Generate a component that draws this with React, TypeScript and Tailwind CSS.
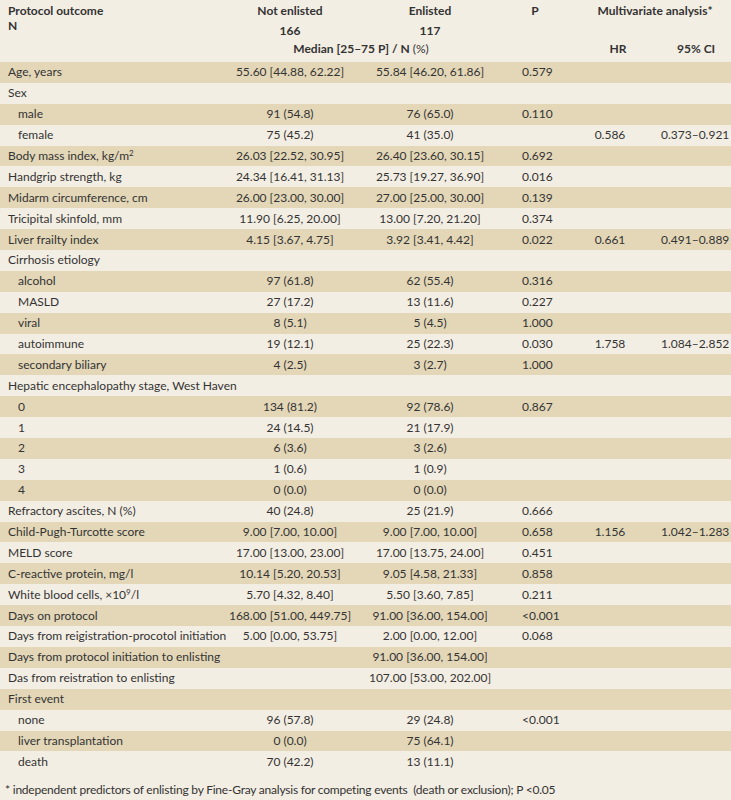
import React from 'react';

interface Row {
  label: React.ReactNode;
  sub?: boolean;
  ne?: string;
  en?: string;
  p?: string;
  hr?: string;
  ci?: string;
}

const rows: Row[] = [
  { label: 'Age, years', ne: '55.60 [44.88, 62.22]', en: '55.84 [46.20, 61.86]', p: '0.579' },
  { label: 'Sex' },
  { label: 'male', sub: true, ne: '91 (54.8)', en: '76 (65.0)', p: '0.110' },
  { label: 'female', sub: true, ne: '75 (45.2)', en: '41 (35.0)', hr: '0.586', ci: '0.373–0.921' },
  { label: <>Body mass index, kg/m<sup className="text-[8px]">2</sup></>, ne: '26.03 [22.52, 30.95]', en: '26.40 [23.60, 30.15]', p: '0.692' },
  { label: 'Handgrip strength, kg', ne: '24.34 [16.41, 31.13]', en: '25.73 [19.27, 36.90]', p: '0.016' },
  { label: 'Midarm circumference, cm', ne: '26.00 [23.00, 30.00]', en: '27.00 [25.00, 30.00]', p: '0.139' },
  { label: 'Tricipital skinfold, mm', ne: '11.90 [6.25, 20.00]', en: '13.00 [7.20, 21.20]', p: '0.374' },
  { label: 'Liver frailty index', ne: '4.15 [3.67, 4.75]', en: '3.92 [3.41, 4.42]', p: '0.022', hr: '0.661', ci: '0.491–0.889' },
  { label: 'Cirrhosis etiology' },
  { label: 'alcohol', sub: true, ne: '97 (61.8)', en: '62 (55.4)', p: '0.316' },
  { label: 'MASLD', sub: true, ne: '27 (17.2)', en: '13 (11.6)', p: '0.227' },
  { label: 'viral', sub: true, ne: '8 (5.1)', en: '5 (4.5)', p: '1.000' },
  { label: 'autoimmune', sub: true, ne: '19 (12.1)', en: '25 (22.3)', p: '0.030', hr: '1.758', ci: '1.084–2.852' },
  { label: 'secondary biliary', sub: true, ne: '4 (2.5)', en: '3 (2.7)', p: '1.000' },
  { label: 'Hepatic encephalopathy stage, West Haven' },
  { label: '0', sub: true, ne: '134 (81.2)', en: '92 (78.6)', p: '0.867' },
  { label: '1', sub: true, ne: '24 (14.5)', en: '21 (17.9)' },
  { label: '2', sub: true, ne: '6 (3.6)', en: '3 (2.6)' },
  { label: '3', sub: true, ne: '1 (0.6)', en: '1 (0.9)' },
  { label: '4', sub: true, ne: '0 (0.0)', en: '0 (0.0)' },
  { label: 'Refractory ascites, N (%)', ne: '40 (24.8)', en: '25 (21.9)', p: '0.666' },
  { label: 'Child-Pugh-Turcotte score', ne: '9.00 [7.00, 10.00]', en: '9.00 [7.00, 10.00]', p: '0.658', hr: '1.156', ci: '1.042–1.283' },
  { label: 'MELD score', ne: '17.00 [13.00, 23.00]', en: '17.00 [13.75, 24.00]', p: '0.451' },
  { label: 'C-reactive protein, mg/l', ne: '10.14 [5.20, 20.53]', en: '9.05 [4.58, 21.33]', p: '0.858' },
  { label: <>White blood cells, ×10<sup className="text-[8px]">9</sup>/l</>, ne: '5.70 [4.32, 8.40]', en: '5.50 [3.60, 7.85]', p: '0.211' },
  { label: 'Days on protocol', ne: '168.00 [51.00, 449.75]', en: '91.00 [36.00, 154.00]', p: '<0.001' },
  { label: 'Days from reigistration-procotol initiation', ne: '5.00 [0.00, 53.75]', en: '2.00 [0.00, 12.00]', p: '0.068' },
  { label: 'Days from protocol initiation to enlisting', en: '91.00 [36.00, 154.00]' },
  { label: 'Das from reistration to enlisting', en: '107.00 [53.00, 202.00]' },
  { label: 'First event' },
  { label: 'none', sub: true, ne: '96 (57.8)', en: '29 (24.8)', p: '<0.001' },
  { label: 'liver transplantation', sub: true, ne: '0 (0.0)', en: '75 (64.1)' },
  { label: 'death', sub: true, ne: '70 (42.2)', en: '13 (11.1)' },
];

const cols = 'grid grid-cols-[225px_130px_150px_60px_90px_76px]';

export default function App() {
  return (
    <div className="w-[731px] h-[800px] bg-[#f3eee3] text-[#333] text-[12px] font-['Lato','Open_Sans',sans-serif] overflow-hidden">
      {/* header */}
      <div className={`${cols} grid-rows-[20px_21px_21px] font-bold leading-[15px] whitespace-nowrap`}>
        <div className="row-span-2 pl-[8px] pt-[3px]">
          <div>Protocol outcome</div>
          <div>N</div>
        </div>
        <div className="text-center pt-[3px]">Not enlisted</div>
        <div className="text-center pt-[3px]">Enlisted</div>
        <div className="text-center pt-[3px]">P</div>
        <div className="col-span-2 text-center pt-[3px] pl-[14px]">Multivariate analysis*</div>
        <div className="col-start-2 row-start-2 text-center pt-[3px]">166</div>
        <div className="col-start-3 row-start-2 text-center pt-[3px]">117</div>
        <div className="col-start-2 col-span-2 row-start-3 text-center pr-[8px]">
          Median [25–75 P] / N <span className="font-normal">(%)</span>
        </div>
        <div className="col-start-5 row-start-3 text-center pl-[16px]">HR</div>
        <div className="col-start-6 row-start-3 pl-[22px]">95% CI</div>
      </div>

      {/* body */}
      {rows.map((r, i) => (
        <div
          key={i}
          className={`${cols} h-[20.9px] items-center whitespace-nowrap ${i % 2 === 0 ? 'bg-[#e3d7b8]' : ''}`}
        >
          <div className={r.sub ? 'pl-[18px]' : 'pl-[8px]'}>{r.label}</div>
          <div className="text-center">{r.ne}</div>
          <div className="text-center">{r.en}</div>
          <div className="pl-[17px]">{r.p}</div>
          <div className="text-center">{r.hr}</div>
          <div className="pl-[6px]">{r.ci}</div>
        </div>
      ))}

      <div className="pl-[5px] pt-[9px] tracking-[-0.22px] whitespace-nowrap">
        * independent predictors of enlisting by Fine-Gray analysis for competing events&nbsp; (death or exclusion); P &lt;0.05
      </div>
    </div>
  );
}
